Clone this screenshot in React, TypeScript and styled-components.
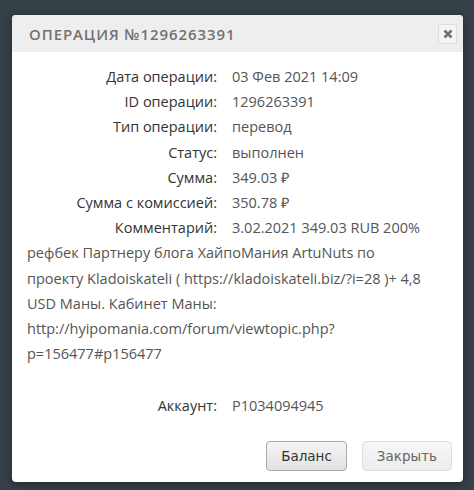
import * as React from 'react';
import styled, { createGlobalStyle } from 'styled-components';

const GlobalStyle = createGlobalStyle`
  html, body {
    margin: 0;
    padding: 0;
    background: #354047;
  }
`;

const Backdrop = styled.div`
  width: 474px;
  height: 490px;
  box-sizing: border-box;
  padding: 15px 11px 13px 12px;
  background: #354047;
`;

const Dialog = styled.div`
  background: #fff;
  border-radius: 4px;
  overflow: hidden;
  box-shadow: 0 2px 8px rgba(0, 0, 0, 0.35);
`;

const Header = styled.div`
  display: flex;
  align-items: center;
  justify-content: space-between;
  height: 37px;
  padding: 0 6px 0 17px;
  background: #eeeeee;
`;

const Title = styled.h3`
  margin: 0;
  font-family: 'Open Sans', sans-serif;
  font-size: 15px;
  font-weight: 600;
  letter-spacing: 0.9px;
  color: #727272;
  text-transform: uppercase;
`;

const CloseButton = styled.button`
  display: flex;
  align-items: center;
  justify-content: center;
  width: 19px;
  height: 20px;
  padding: 0;
  border: 1px solid #dcdcdc;
  border-radius: 2px;
  background: #f4f4f4;
  cursor: pointer;
`;

const Body = styled.div`
  padding: 12px 15px 0 15px;
  font-family: 'Open Sans', sans-serif;
  font-size: 14.5px;
  line-height: 25.2px;
  color: #555;
`;

const Row = styled.div<{ $gap?: boolean }>`
  display: flex;
  margin-top: ${(p) => (p.$gap ? '27px' : '0')};
`;

const Label = styled.span`
  flex: 0 0 190px;
  padding-right: 15px;
  text-align: right;
  color: #333;
`;

const Value = styled.span`
  white-space: nowrap;
`;

const CommentRest = styled.div`
  word-break: break-all;
`;

const Footer = styled.div`
  display: flex;
  justify-content: flex-end;
  gap: 15px;
  padding: 22px 11px 11px;
`;

const Button = styled.button<{ $muted?: boolean }>`
  height: 30px;
  padding: 0 14px;
  font-family: 'DejaVu Sans', Verdana, sans-serif;
  font-size: 13.5px;
  color: ${(p) => (p.$muted ? '#666' : '#333')};
  border: 1px solid ${(p) => (p.$muted ? '#dedede' : '#a9a9a9')};
  border-radius: 4px;
  background: ${(p) =>
    p.$muted
      ? 'linear-gradient(#f7f7f7, #ececec)'
      : 'linear-gradient(#f4f4f4, #e2e2e2)'};
  cursor: pointer;
`;

const rows: [string, string][] = [
  ['Дата операции:', '03 Фев 2021 14:09'],
  ['ID операции:', '1296263391'],
  ['Тип операции:', 'перевод'],
  ['Статус:', 'выполнен'],
  ['Сумма:', '349.03 ₽'],
  ['Сумма с комиссией:', '350.78 ₽'],
];

// comment lines, broken where the original dialog wraps them
const comment = [
  '3.02.2021 349.03 RUB 200%',
  'рефбек Партнеру блога ХайпоМания ArtuNuts по',
  'проекту Kladoiskateli ( https://kladoiskateli.biz/?i=28 )+ 4,8',
  'USD Маны. Кабинет Маны:',
  'http://hyipomania.com/forum/viewtopic.php?',
  'p=156477#p156477',
];

export default function App() {
  const [first, ...rest] = comment;
  return (
    <>
      <GlobalStyle />
      <Backdrop>
        <Dialog>
          <Header>
            <Title>Операция №1296263391</Title>
            <CloseButton aria-label="close">
              <svg width="10" height="10" viewBox="0 0 10 10">
                <path d="M1.5 1.5 L8.5 8.5 M8.5 1.5 L1.5 8.5" stroke="#707070" strokeWidth="2.6" />
              </svg>
            </CloseButton>
          </Header>
          <Body>
            {rows.map(([label, value]) => (
              <Row key={label}>
                <Label>{label}</Label>
                <Value>{value}</Value>
              </Row>
            ))}
            <Row>
              <Label>Комментарий:</Label>
              <Value>{first}</Value>
            </Row>
            <CommentRest>
              {rest.map((line, i) => (
                <React.Fragment key={i}>
                  {line}
                  {i < rest.length - 1 && <br />}
                </React.Fragment>
              ))}
            </CommentRest>
            <Row $gap>
              <Label>Аккаунт:</Label>
              <Value>P1034094945</Value>
            </Row>
          </Body>
          <Footer>
            <Button>Баланс</Button>
            <Button $muted>Закрыть</Button>
          </Footer>
        </Dialog>
      </Backdrop>
    </>
  );
}
